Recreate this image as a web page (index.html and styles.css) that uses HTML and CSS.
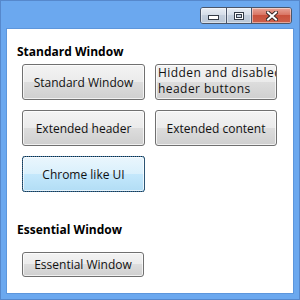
FILE: index.html
```html
<!DOCTYPE html>
<html lang="en">
<head>
  <meta charset="UTF-8" />
  <title>Window Samples</title>
  <link rel="stylesheet" href="styles.css">
</head>
<body>

  <div class="window">

    <!-- Caption bar -->
    <div class="titlebar">
      <div class="caption-buttons">
        <span class="cap-btn cap-min">
          <svg width="11" height="5" viewBox="0 0 11 5"><rect x="0.5" y="0.5" width="10" height="4" fill="#fff" stroke="#333b47"/></svg>
        </span>
        <span class="cap-btn cap-max">
          <svg width="10" height="8" viewBox="0 0 10 8"><rect x="0.5" y="0.5" width="9" height="7" fill="#fff" stroke="#333b47"/><rect x="2.5" y="2.5" width="5" height="3" fill="#c9d4e2" stroke="#333b47"/></svg>
        </span>
        <span class="cap-btn cap-close">
          <svg width="12" height="10" viewBox="0 0 12 10"><path d="M2 1.5 L10 8.5 M10 1.5 L2 8.5" stroke="#3a2a28" stroke-width="4" stroke-linecap="square"/><path d="M2 1.5 L10 8.5 M10 1.5 L2 8.5" stroke="#fff" stroke-width="2" stroke-linecap="square"/></svg>
        </span>
      </div>
    </div>

    <!-- Client area -->
    <div class="client">
      <h3 class="group-title">Standard Window</h3>
      <div class="button-grid">
        <button class="btn">Standard Window</button>
        <button class="btn btn-wrap"><span>Hidden and disabled</span><span>header buttons</span></button>
        <button class="btn">Extended header</button>
        <button class="btn">Extended content</button>
        <button class="btn btn-focused">Chrome like UI</button>
      </div>

      <h3 class="group-title essential-title">Essential Window</h3>
      <button class="btn btn-small">Essential Window</button>
    </div>

  </div>

</body>
</html>
```

FILE: styles.css
```css
body {
  margin: 0;
  font-family: "Open Sans", "Noto Sans", sans-serif;
}

.window {
  width: 300px;
  height: 300px;
  box-sizing: border-box;
  border: 1px solid #5688cc;
  background: #6ba8ef;
  display: flex;
  flex-direction: column;
}

.titlebar {
  height: 28px;
  box-sizing: border-box;
  padding: 6px 7px 0 0;
  display: flex;
  justify-content: flex-end;
  align-items: flex-start;
}

.caption-buttons {
  display: flex;
  height: 17px;
  box-sizing: border-box;
  border: 1px solid #4a566a;
  border-radius: 3px;
  overflow: hidden;
}

.cap-btn {
  display: flex;
  justify-content: center;
  align-items: center;
  box-shadow: inset 0 0 0 1px rgba(255, 255, 255, 0.45);
}

.cap-btn + .cap-btn {
  border-left: 1px solid #4a566a;
}

.cap-min {
  width: 25px;
  align-items: flex-end;
  padding-bottom: 3px;
  box-sizing: border-box;
  background: linear-gradient(#e9eef5, #d3dce8 50%, #c4cfdd 50%, #b9c6d6);
}

.cap-max {
  width: 24px;
  background: linear-gradient(#e9eef5, #d3dce8 50%, #c4cfdd 50%, #b9c6d6);
}

.cap-close {
  width: 39px;
  background: linear-gradient(#e8a497, #d8715f 50%, #c9513c 50%, #cd5f4a);
}

.client {
  flex: 1;
  margin: 0 6px 6px;
  padding: 15px 10px 0;
  background: #fff;
  box-shadow: 0 0 0 1px #5d96dc;
}

.group-title {
  margin: 0;
  font-size: 12px;
  line-height: 16px;
  font-weight: 700;
  color: #000;
}

.button-grid {
  display: grid;
  grid-template-columns: 123px 122px;
  grid-auto-rows: 36px;
  gap: 10px;
  margin: 4px 0 0 5px;
}

.btn {
  box-sizing: border-box;
  padding: 0;
  border: 1px solid #707070;
  border-radius: 3px;
  background: linear-gradient(#f3f3f3, #ebebeb 50%, #dddddd 50%, #cfcfcf);
  box-shadow: inset 0 0 0 1px rgba(255, 255, 255, 0.7);
  font-family: inherit;
  font-size: 12px;
  color: #111;
}

/* text runs past the button edge and gets clipped */
.btn-wrap {
  display: flex;
  flex-direction: column;
  align-items: flex-start;
  justify-content: flex-start;
  padding-left: 2px;
  overflow: hidden;
  white-space: nowrap;
  line-height: 16px;
  letter-spacing: 0.45px;
}

.btn-focused {
  border-color: #3c7fb1;
  background: linear-gradient(#eaf6fd, #d9f0fc 50%, #c4e8fc 50%, #b2ddf5);
  outline: 1px dotted #1b2b38;
  outline-offset: -1px;
}

.essential-title {
  margin-top: 30px;
}

.btn-small {
  width: 122px;
  height: 25px;
  margin: 14px 0 0 5px;
}
```
